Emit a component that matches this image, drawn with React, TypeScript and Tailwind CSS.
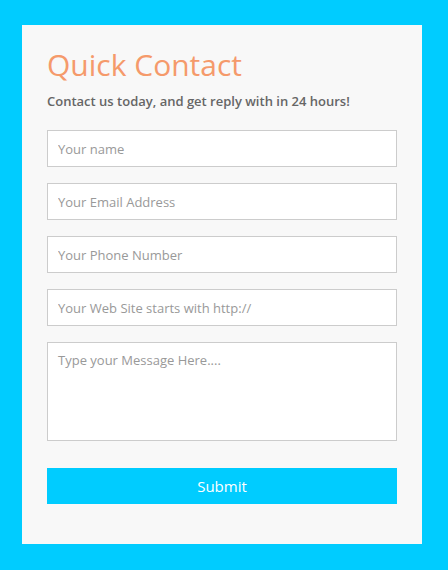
export default function App() {
  const fields = [
    "Your name",
    "Your Email Address",
    "Your Phone Number",
    "Your Web Site starts with http://",
  ];

  return (
    <div className="min-h-[570px] bg-[#00ccff] pl-[22px] pr-[26px] pt-[25px] pb-[26px] font-['Open_Sans',sans-serif]">
      <form
        onSubmit={(e) => e.preventDefault()}
        className="flex flex-col bg-[#f8f8f8] px-[25px] pt-[20px] pb-[40px]"
      >
        <h1 className="text-[30px] font-normal leading-[40px] text-[#f59a6b]">Quick Contact</h1>
        <p className="mt-[7px] text-[13px] font-semibold leading-[18px] text-[#666]">
          Contact us today, and get reply with in 24 hours!
        </p>

        <div className="mt-[20px] flex flex-col gap-[16px]">
          {fields.map((f) => (
            <input
              key={f}
              type="text"
              placeholder={f}
              className="h-[37px] w-full border border-[#cccccc] bg-white px-[10px] text-[13px] text-[#555] outline-none placeholder:text-[#999]"
            />
          ))}
          <textarea
            placeholder="Type your Message Here...."
            className="h-[99px] w-full resize-none border border-[#cccccc] bg-white px-[10px] py-[8px] text-[13px] text-[#555] outline-none placeholder:text-[#999]"
          />
        </div>

        <button
          type="submit"
          className="mt-[27px] h-[36px] w-full bg-[#00ccff] text-[15px] text-white"
        >
          Submit
        </button>
      </form>
    </div>
  );
}
